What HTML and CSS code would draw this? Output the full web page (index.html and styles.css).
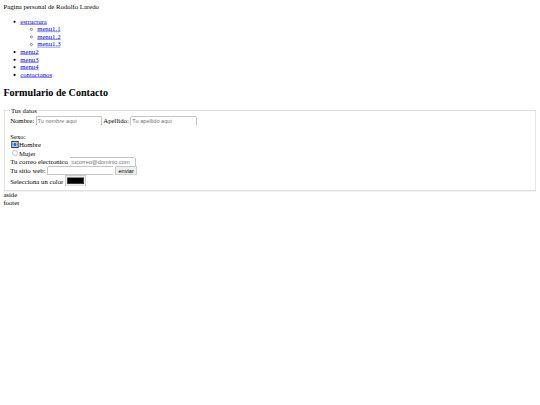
FILE: index.html
```html
<!DOCTYPE html>
<html lang="es" class="page">
<head>
<meta charset="utf-8">
<title>Pagina personal</title>
<link rel="stylesheet" href="styles.css">
</head>
<body class="body">
<div class="sheet">
<header class="top">Pagina personal de Rodolfo Laredo</header>
<nav class="nav">
<ul>
<li><a href="#">estructura</a>
<ul>
<li><a href="#">menu1.1</a></li>
<li><a href="#">menu1.2</a></li>
<li><a href="#">menu1.3</a></li>
</ul>
</li>
<li><a href="#">menu2</a></li>
<li><a href="#">menu3</a></li>
<li><a href="#">menu4</a></li>
<li><a href="#">contactanos</a></li>
</ul>
</nav>
<section class="main">
<h2>Formulario de Contacto</h2>
<form class="form" onsubmit="return false">
<fieldset>
<legend>Tus datos</legend>
Nombre: <input class="field" type="text" placeholder="Tu nombre aqui"> Apellido: <input class="field" type="text" placeholder="Tu apellido aqui"><br><br>
Sexo:<br>
<input class="radio" type="radio" name="sexo" value="h" checked autofocus>Hombre<br>
<input class="radio" type="radio" name="sexo" value="m">Mujer<br>
Tu correo electronico <input class="field" type="email" placeholder="tucorreo@dominio.com"><br>
Tu sitio web: <input class="field" type="url"> <input type="submit" value="enviar"><br>
Selecciona un color <input type="color" value="#000000">
</fieldset>
</form>
</section>
<aside class="side">aside</aside>
<footer class="foot">footer</footer>
</div>
</body>
</html>
```
FILE: styles.css
```css
.page {
  overflow: hidden;
  font-family: "Liberation Serif", "Times New Roman", serif;
}
.body {
  margin: 0;
  overflow: hidden;
  height: 405px;
  font-family: "Liberation Serif", "Times New Roman", serif;
}
.sheet {
  width: 1264px;
  padding: 8px;
  transform: scale(0.421875);
  transform-origin: 0 0;
}
.form input {
  font-family: "Liberation Sans", Arial, sans-serif;
}
.form .field {
  box-sizing: border-box;
  width: 157px;
}
.radio:focus {
  outline: 2px solid #101010;
  outline-offset: 0;
  border-radius: 50%;
}
```
